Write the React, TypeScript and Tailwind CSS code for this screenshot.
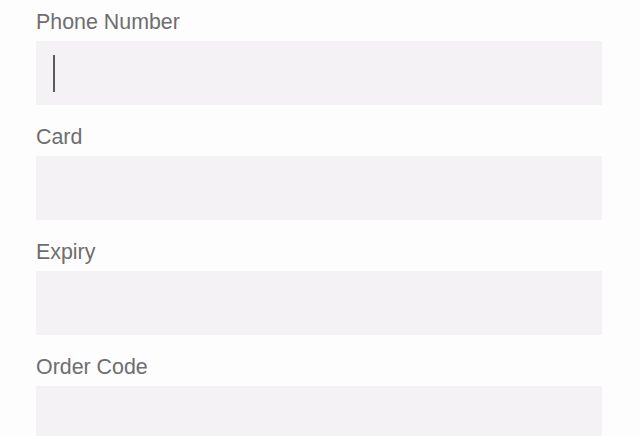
import React from "react";

const fields = ["Phone Number", "Card", "Expiry", "Order Code"];

export default function App() {
  return (
    <div
      className="w-[640px] h-[436px] overflow-hidden bg-[#fdfdfd] pl-[36px]"
      style={{ fontFamily: '"Liberation Sans", Arial, sans-serif' }}
    >
      <div className="flex w-[566px] flex-col gap-[10px]">
        {fields.map((f, i) => (
          <div key={f} className="flex flex-col">
            <div className="h-[41px] pt-[4px] text-[21.4px] leading-[37px] text-[#6e6e6e]">
              {f}
            </div>
            <div className="flex h-[64px] items-center bg-[#f4f2f5] pl-[17px]">
              {i === 0 && <div className="h-[37px] w-[2px] bg-[#5a5a5a]" />}
            </div>
          </div>
        ))}
      </div>
    </div>
  );
}
